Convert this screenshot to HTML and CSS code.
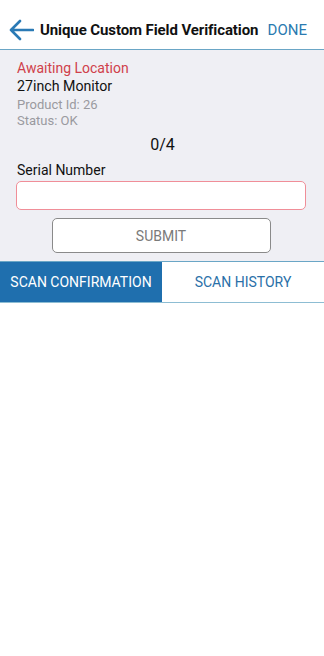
FILE: index.html
```html
<!DOCTYPE html>
<html>
<head>
<meta charset="utf-8">
<link rel="stylesheet" href="styles.css">
</head>
<body>
<div class="screen">
  <header class="topbar">
    <svg class="back" width="26" height="22" viewBox="0 0 26 22">
      <path d="M12 2 L3 11 L12 20 M3 11 H25" fill="none" stroke="#2a7ab5" stroke-width="2.6" stroke-linecap="round" stroke-linejoin="round"/>
    </svg>
    <div class="title">Unique Custom Field Verification</div>
    <div class="done">DONE</div>
  </header>
  <section class="panel">
    <div class="status-red">Awaiting Location</div>
    <div class="product">27inch Monitor</div>
    <div class="meta">Product Id: 26</div>
    <div class="meta">Status: OK</div>
    <div class="count">0/4</div>
    <div class="label">Serial Number</div>
    <input class="field" type="text">
    <div class="btn-row"><button class="submit">SUBMIT</button></div>
  </section>
  <nav class="tabs">
    <div class="tab active">SCAN CONFIRMATION</div>
    <div class="tab">SCAN HISTORY</div>
  </nav>
</div>
</body>
</html>
```
FILE: styles.css
```css
* { box-sizing: border-box; }
html, body { margin: 0; padding: 0; background: #fff; }
body { font-family: Roboto, "Liberation Sans", Arial, sans-serif; color: #111; }
.screen { width: 324px; min-height: 656px; background: #fff; }
.topbar {
  height: 50px;
  display: flex;
  align-items: center;
  padding: 10px 0 0 8px;
  border-bottom: 1px solid #6aa6c6;
  background: #fff;
}
.back { flex: none; margin-right: 6px; }
.title { font-weight: 700; font-size: 15px; letter-spacing: -0.1px; color: #111; white-space: nowrap; }
.done { margin-left: auto; margin-right: 17px; font-size: 15px; color: #2a7ab0; }
.panel {
  background: #efeff4;
  padding: 9px 16px 8px 17px;
}
.status-red { color: #d0404a; font-size: 14px; line-height: 18px; }
.product { font-size: 14.2px; line-height: 18px; color: #111; }
.meta { font-size: 13px; line-height: 17px; color: #9a9a9f; }
.meta + .meta { margin-top: -1px; }
.product + .meta { margin-top: 1px; }
.count { text-align: center; font-size: 16px; line-height: 20px; margin-top: 6px; }
.label { font-size: 14px; line-height: 18px; margin-top: 6px; }
.field {
  display: block;
  width: 290px;
  height: 29px;
  margin: 2px 0 0 -1px;
  border: 1.5px solid #f08e98;
  border-radius: 5px;
  background: #fff;
  outline: none;
}
.btn-row { display: flex; justify-content: center; margin-top: 8px; padding-right: 3px; }
.submit {
  width: 219px;
  height: 35px;
  border: 1.3px solid #8a8a8a;
  border-radius: 5px;
  background: #fff;
  color: #7a7a7a;
  font-family: Roboto, "Liberation Sans", Arial, sans-serif;
  font-size: 14px;
}
.tabs {
  display: flex;
  height: 42px;
  border-top: 1px solid #6aa6c6;
  border-bottom: 1px solid #8dbdd3;
  background: #fff;
}
.tab {
  flex: 1;
  display: flex;
  align-items: center;
  justify-content: center;
  font-size: 14px;
  color: #2a70a8;
}
.tab.active { background: #1f6fae; color: #fff; }
```
